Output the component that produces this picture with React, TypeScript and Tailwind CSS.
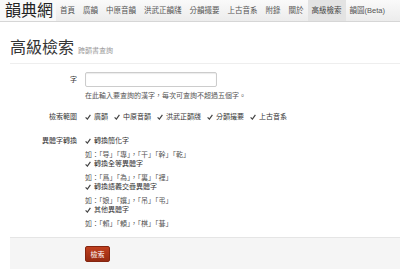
import React from 'react'

const navItems = ['首頁', '廣韻', '中原音韻', '洪武正韻牋', '分韻撮要', '上古音系', '附錄', '關於', '高級檢索', '韻圖(Beta)']

const Check = () => (
  <span className="inline-flex items-center justify-center w-[6px] h-[6px] shrink-0">
    <svg viewBox="0 0 10 10" className="w-[6px] h-[6px]">
      <path d="M1 5.5 L4 8.5 L9 1.5" fill="none" stroke="#444" strokeWidth="2" />
    </svg>
  </span>
)

const CheckItem = ({ label, h = 'h-[9px]' }: { label: string; h?: string }) => (
  <div className={'flex items-center gap-[3px] ' + h}>
    <Check />
    <span>{label}</span>
  </div>
)

const variants = [
  { label: '轉換簡化字', ex: '如：「导」「專」，「干」「幹」「乾」' },
  { label: '轉換全等異體字', ex: '如：「爲」「為」，「裏」「裡」' },
  { label: '轉換語義交疊異體字', ex: '如：「娘」「孃」，「吊」「弔」' },
  { label: '其他異體字', ex: '如：「賴」「頼」，「棋」「碁」' },
]

export default function App() {
  return (
    <div
      className="w-[400px] h-[276px] overflow-hidden bg-white text-[#333]"
      style={{ fontFamily: '"Liberation Sans", "Noto Sans CJK TC", sans-serif' }}
    >
      {/* navbar */}
      <div className="h-[22px] flex items-stretch bg-gradient-to-b from-[#fafafa] to-[#ececec] border-b border-[#d6d6d6]">
        <div className="w-[56px] flex items-center pl-[5px] text-[16px] leading-none text-[#222] bg-[#f9f9f9]">
          韻典網
        </div>
        <div className="flex items-stretch text-[7.5px] text-[#555] whitespace-nowrap">
          {navItems.map((n) => (
            <div
              key={n}
              className={
                'flex items-center px-[4px] ' +
                (n === '高級檢索' ? 'bg-[#e3e3e3] text-[#444]' : '')
              }
            >
              {n}
            </div>
          ))}
        </div>
      </div>

      <div className="pl-[10px]">
        {/* page header */}
        <div className="mt-[17px] pb-[6px] border-b border-[#eee] flex items-baseline gap-[4px]">
          <span className="text-[16px] leading-[18px] text-[#333]">高級檢索</span>
          <span className="text-[7px] text-[#999]">跨韻書查詢</span>
        </div>

        <div className="text-[7px] leading-[9px]">
          {/* 字 */}
          <div className="flex mt-[8px]">
            <div className="w-[67px] h-[15px] flex items-center justify-end">字</div>
            <div className="ml-[8px]">
              <div className="w-[132px] h-[15px] border border-[#ccc] rounded-[2px] bg-white shadow-[inset_0_1px_1px_rgba(0,0,0,0.08)]" />
              <p className="mt-[4px] h-[9px] text-[#555]">在此輸入要查詢的漢字，每次可查詢不超過五個字。</p>
            </div>
          </div>

          {/* 檢索範圍 */}
          <div className="flex mt-[12px]">
            <div className="w-[67px] h-[9px] text-right">檢索範圍</div>
            <div className="ml-[8px] flex items-center gap-[6px]">
              <CheckItem label="廣韻" />
              <CheckItem label="中原音韻" />
              <CheckItem label="洪武正韻牋" />
              <CheckItem label="分韻撮要" />
              <CheckItem label="上古音系" />
            </div>
          </div>

          {/* 異體字轉換 */}
          <div className="flex mt-[16px] leading-[7px]">
            <div className="w-[67px] h-[7px] text-right">異體字轉換</div>
            <div className="ml-[8px] flex flex-col gap-[2px]">
              {variants.map((v) => (
                <div key={v.label} className="flex flex-col">
                  <CheckItem label={v.label} h="h-[7px]" />
                  <p className="mt-[7px] h-[7px] text-[#555]">{v.ex}</p>
                </div>
              ))}
            </div>
          </div>
        </div>

        {/* form actions */}
        <div className="mt-[10px] h-[32px] bg-[#f5f5f5] border-t border-[#e5e5e5] pl-[75px] pt-[8px]">
          <button className="w-[25px] h-[16px] rounded-[2px] bg-gradient-to-b from-[#c0401f] to-[#962b12] border border-[#842510] text-white text-[7px] leading-none flex items-center justify-center">
            檢索
          </button>
        </div>
      </div>
    </div>
  )
}
